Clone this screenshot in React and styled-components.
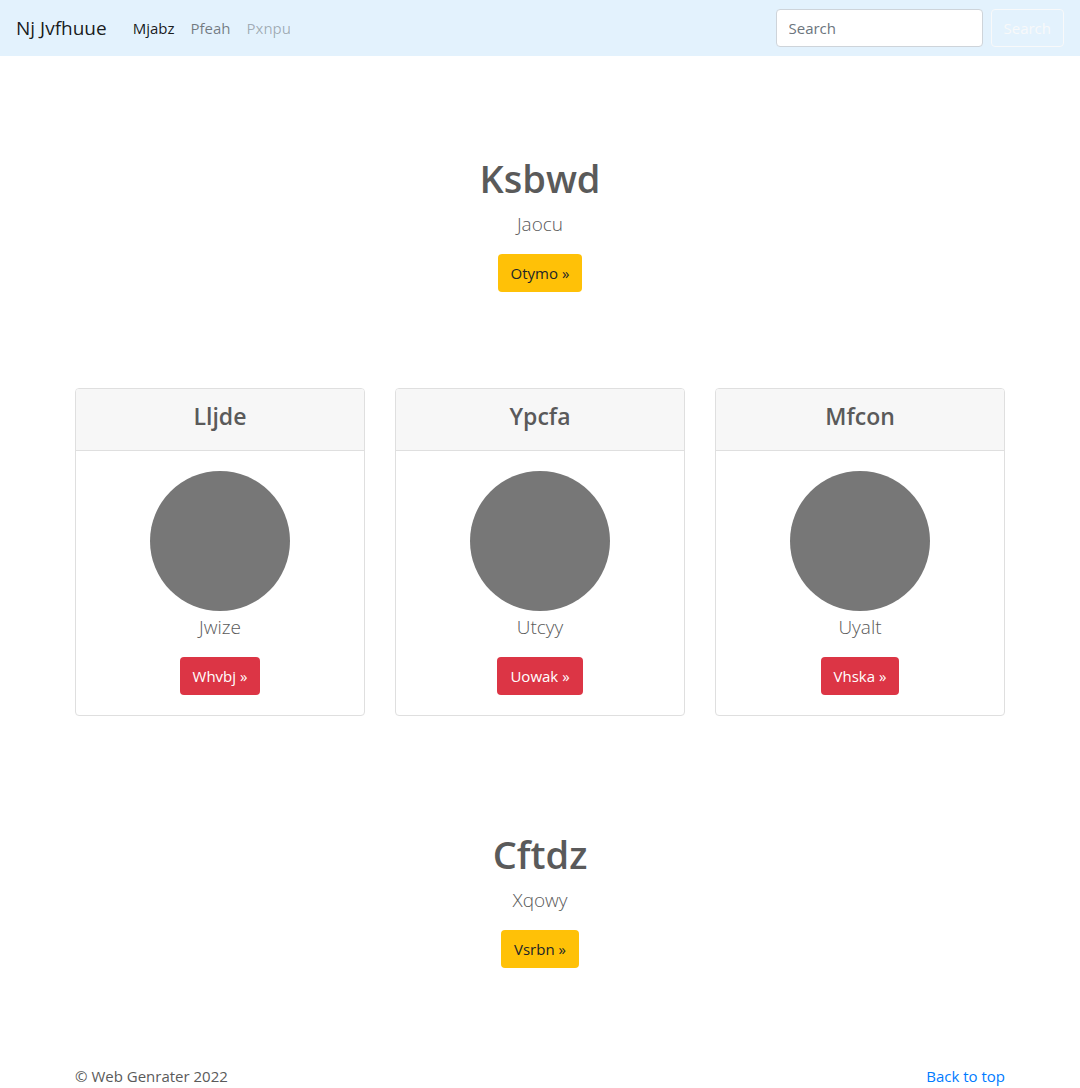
import React from "react";
import styled, { createGlobalStyle, css } from "styled-components";

const GlobalStyle = createGlobalStyle`
  *, *::before, *::after { box-sizing: border-box; }
  body {
    margin: 0;
    background: #fff;
    color: #5a5a5a;
    font-family: "Open Sans", "Noto Sans", sans-serif;
    font-size: 15px;
    line-height: 24px;
  }
`;

const Navbar = styled.nav`
  display: flex;
  align-items: center;
  padding: 8px 16px;
  min-height: 56px;
  background: #e3f2fd;
`;

const Brand = styled.a`
  margin-right: 18px;
  color: rgba(0, 0, 0, 0.9);
  font-size: 19px;
  line-height: 30px;
  text-decoration: none;
  white-space: nowrap;
`;

const NavList = styled.ul`
  display: flex;
  margin: 0 auto 0 0;
  padding: 0;
  list-style: none;
`;

const navColors = {
  active: "rgba(0, 0, 0, 0.9)",
  normal: "rgba(0, 0, 0, 0.5)",
  disabled: "rgba(0, 0, 0, 0.3)",
};

const NavLink = styled.a`
  display: block;
  padding: 8px;
  color: ${({ $state }) => navColors[$state]};
  text-decoration: none;
`;

const SearchForm = styled.form`
  display: flex;
  align-items: center;
  gap: 8px;
`;

const SearchInput = styled.input`
  width: 207px;
  height: 38px;
  padding: 6px 12px;
  border: 1px solid #ced4da;
  border-radius: 4px;
  background: #fff;
  color: #495057;
  font: inherit;
  &::placeholder { color: #6c757d; opacity: 1; }
`;

const buttonStyles = css`
  display: inline-block;
  padding: 6px 12px;
  border: 1px solid transparent;
  border-radius: 4px;
  font: inherit;
  text-align: center;
  text-decoration: none;
  cursor: pointer;
`;

const SearchButton = styled.button`
  ${buttonStyles}
  border-color: #f8f9fa;
  background: transparent;
  color: #f8f9fa;
`;

const tones = {
  warning: { background: "#ffc107", color: "#212529" },
  danger: { background: "#dc3545", color: "#fff" },
};

const ActionLink = styled.a`
  ${buttonStyles}
  background: ${({ $tone }) => tones[$tone].background};
  color: ${({ $tone }) => tones[$tone].color};
`;

const Container = styled.div`
  width: 100%;
  max-width: 960px;
  margin: 0 auto;
  padding: 0 15px;
`;

const HeroSection = styled.section`
  display: flex;
  flex-direction: column;
  align-items: center;
  padding: 96px 15px;
  text-align: center;
`;

const HeroTitle = styled.h1`
  margin: 0 0 4px;
  font-size: 38px;
  font-weight: 600;
  line-height: 52px;
`;

const Lead = styled.p`
  margin: 0 0 14px;
  font-size: 19px;
  font-weight: 300;
  line-height: 32px;
`;

const CardGrid = styled.div`
  display: grid;
  grid-template-columns: repeat(auto-fit, minmax(240px, 1fr));
  gap: 30px;
  margin-bottom: 16px;
`;

const CardBox = styled.article`
  overflow: hidden;
  border: 1px solid #dfdfdf;
  border-radius: 4px;
  text-align: center;
`;

const CardHeader = styled.header`
  padding: 12px 20px 18px;
  border-bottom: 1px solid #dfdfdf;
  background: #f7f7f7;
`;

const CardTitle = styled.h2`
  margin: 0;
  font-size: 23px;
  font-weight: 600;
  line-height: 31px;
`;

const CardBody = styled.div`
  display: flex;
  flex-direction: column;
  align-items: center;
  padding: 20px;
`;

const Avatar = styled.div`
  width: 140px;
  height: 140px;
  border-radius: 50%;
  background: #777;
`;

const Footer = styled.footer`
  display: flex;
  justify-content: space-between;
`;

const TopLink = styled.a`
  color: #007bff;
  text-decoration: none;
`;

const cards = [
  { title: "Lljde", text: "Jwize", action: "Whvbj" },
  { title: "Ypcfa", text: "Utcyy", action: "Uowak" },
  { title: "Mfcon", text: "Uyalt", action: "Vhska" },
];

function Hero({ title, text, action }) {
  return (
    <HeroSection>
      <HeroTitle>{title}</HeroTitle>
      <Lead>{text}</Lead>
      <ActionLink $tone="warning" href="#">{action} »</ActionLink>
    </HeroSection>
  );
}

function Card({ title, text, action }) {
  return (
    <CardBox>
      <CardHeader>
        <CardTitle>{title}</CardTitle>
      </CardHeader>
      <CardBody>
        <Avatar />
        <Lead>{text}</Lead>
        <ActionLink $tone="danger" href="#">{action} »</ActionLink>
      </CardBody>
    </CardBox>
  );
}

export default function App() {
  return (
    <>
      <GlobalStyle />
      <Navbar>
        <Brand href="#">Nj Jvfhuue</Brand>
        <NavList>
          <li><NavLink $state="active" href="#" aria-current="page">Mjabz</NavLink></li>
          <li><NavLink $state="normal" href="#">Pfeah</NavLink></li>
          <li><NavLink $state="disabled" href="#" aria-disabled="true">Pxnpu</NavLink></li>
        </NavList>
        <SearchForm role="search" onSubmit={(event) => event.preventDefault()}>
          <SearchInput type="search" placeholder="Search" aria-label="Search" />
          <SearchButton type="submit">Search</SearchButton>
        </SearchForm>
      </Navbar>
      <main>
        <Hero title="Ksbwd" text="Jaocu" action="Otymo" />
        <Container>
          <CardGrid>
            {cards.map((card) => <Card key={card.title} {...card} />)}
          </CardGrid>
        </Container>
        <Hero title="Cftdz" text="Xqowy" action="Vsrbn" />
      </main>
      <Container>
        <Footer>
          <span>© Web Genrater 2022</span>
          <TopLink href="#">Back to top</TopLink>
        </Footer>
      </Container>
    </>
  );
}
